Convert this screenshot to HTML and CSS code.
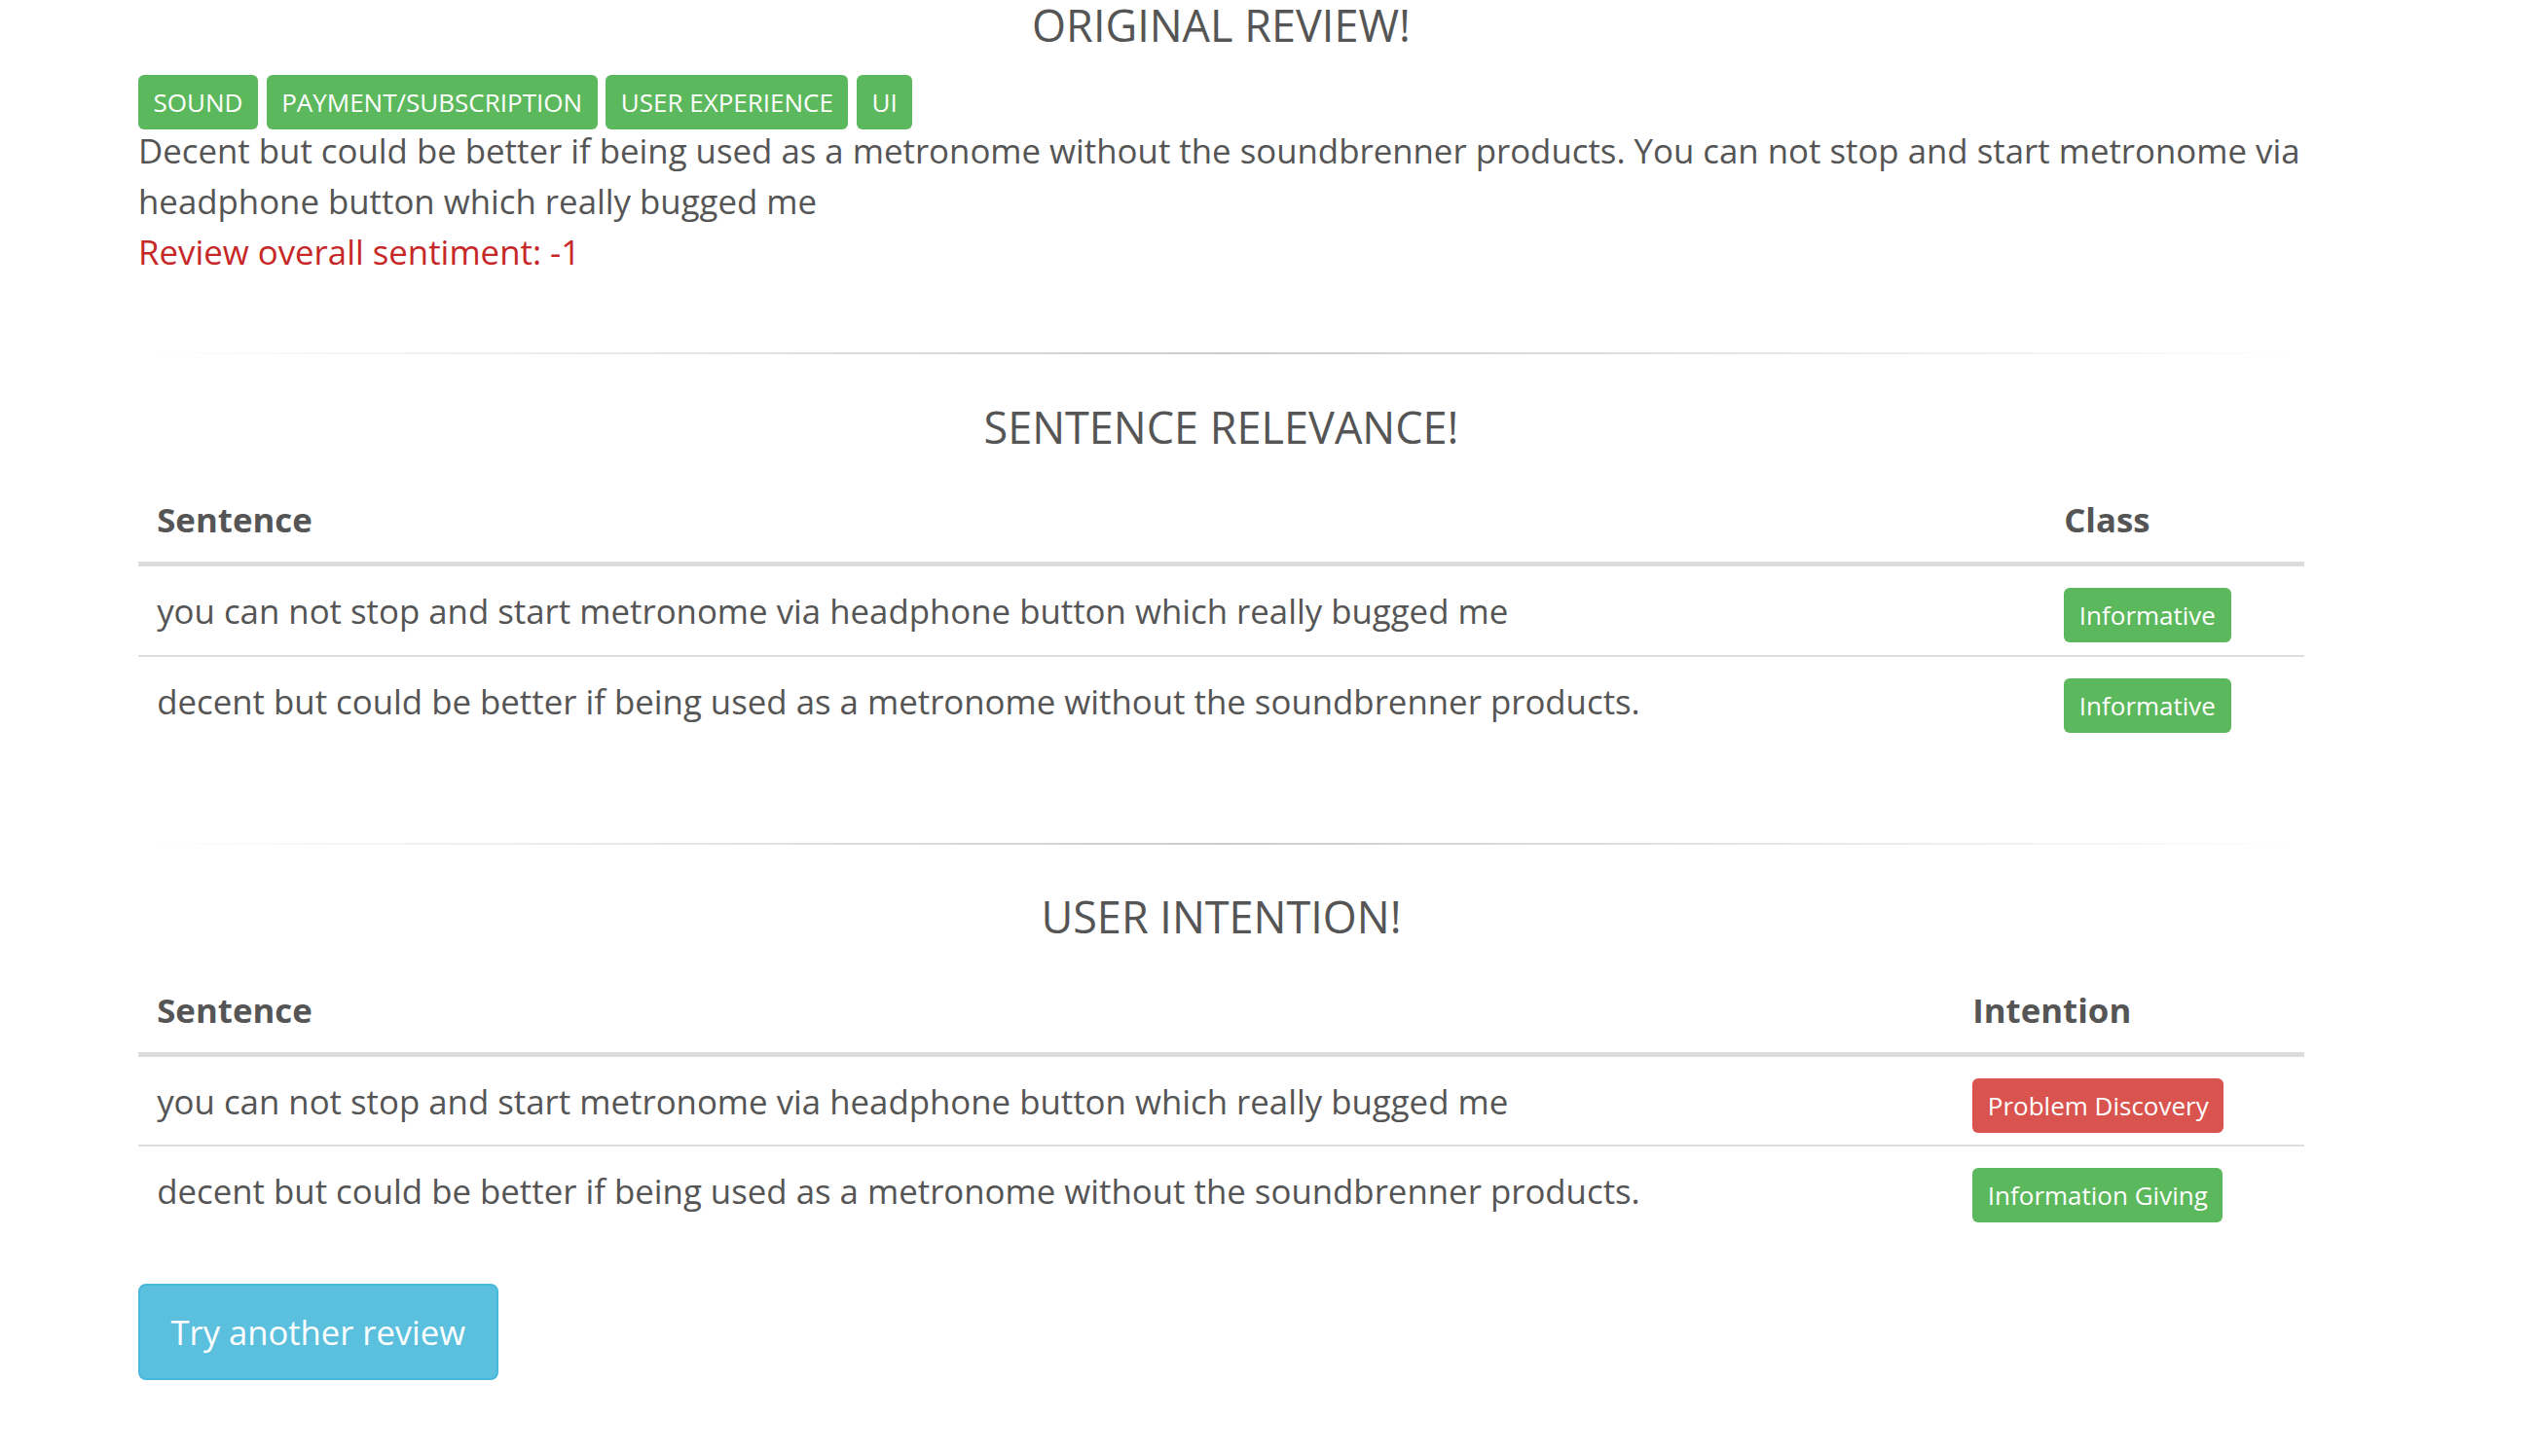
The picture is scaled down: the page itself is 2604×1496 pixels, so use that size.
FILE: index.html
```html
<!DOCTYPE html>
<html lang="en">
<head>
<meta charset="utf-8">
<title>Review analysis</title>
<link rel="stylesheet" href="styles.css">
</head>
<body>
<main class="container">
  <section class="review">
    <h3 class="section-title">ORIGINAL REVIEW!</h3>
    <div class="tags">
      <span class="tag tag-success">SOUND</span>
      <span class="tag tag-success">PAYMENT/SUBSCRIPTION</span>
      <span class="tag tag-success">USER EXPERIENCE</span>
      <span class="tag tag-success">UI</span>
    </div>
    <p class="review-text">Decent but could be better if being used as a metronome without the soundbrenner products. You can not stop and start metronome via headphone button which really bugged me</p>
    <p class="sentiment">Review overall sentiment: -1</p>
  </section>

  <hr class="divider">

  <section class="analysis">
    <h3 class="section-title">SENTENCE RELEVANCE!</h3>
    <table class="data-table">
      <thead>
        <tr><th>Sentence</th><th class="col-class">Class</th></tr>
      </thead>
      <tbody>
        <tr>
          <td>you can not stop and start metronome via headphone button which really bugged me</td>
          <td><span class="tag tag-success">Informative</span></td>
        </tr>
        <tr>
          <td>decent but could be better if being used as a metronome without the soundbrenner products.</td>
          <td><span class="tag tag-success">Informative</span></td>
        </tr>
      </tbody>
    </table>
  </section>

  <hr class="divider">

  <section class="analysis">
    <h3 class="section-title">USER INTENTION!</h3>
    <table class="data-table">
      <thead>
        <tr><th>Sentence</th><th class="col-intention">Intention</th></tr>
      </thead>
      <tbody>
        <tr>
          <td>you can not stop and start metronome via headphone button which really bugged me</td>
          <td><span class="tag tag-danger">Problem Discovery</span></td>
        </tr>
        <tr>
          <td>decent but could be better if being used as a metronome without the soundbrenner products.</td>
          <td><span class="tag tag-success">Information Giving</span></td>
        </tr>
      </tbody>
    </table>
  </section>

  <div class="actions">
    <button class="btn-info" type="button">Try another review</button>
  </div>
</main>
</body>
</html>
```

FILE: styles.css
```css
html, body {
  margin: 0;
  padding: 0;
  background: #ffffff;
}

body {
  font-family: "Open Sans", "Liberation Sans", sans-serif;
  font-size: 34.8px;
  line-height: 52px;
  color: #555555;
}

.container {
  width: 2225px;
  margin-left: 142px;
  padding-top: 1px;
  padding-bottom: 60px;
}

.section-title {
  margin: 0;
  font-size: 45px;
  font-weight: 400;
  line-height: 49.5px;
  text-align: center;
  color: #555555;
}

.tags {
  display: flex;
  align-items: flex-start;
  gap: 8.5px;
  height: 52px;
  margin-top: 26.5px;
}

.tag {
  display: inline-block;
  height: 56px;
  padding: 0 0.6em;
  font-size: 26px;
  line-height: 56px;
  font-weight: 400;
  color: #ffffff;
  border-radius: 6px;
  white-space: nowrap;
  vertical-align: baseline;
}

.tag-success {
  background: #5cb85c;
}

.tag-danger {
  background: #d9534f;
}

.review-text {
  margin: 0;
}

.sentiment {
  margin: 0;
  color: #c62828;
}

.divider {
  margin: 77px 0 49.8px;
  height: 2px;
  border: 0;
  background-image: linear-gradient(to right, rgba(0, 0, 0, 0), rgba(0, 0, 0, 0.2), rgba(0, 0, 0, 0));
}

.analysis {
  padding-bottom: 23px;
}

.data-table {
  width: 100%;
  margin-top: 27.5px;
  border-collapse: collapse;
  border-spacing: 0;
  table-layout: fixed;
}

.data-table th {
  padding: 19.2px;
  text-align: left;
  font-weight: 700;
  line-height: 48px;
  vertical-align: bottom;
  border-bottom: 5px solid #dddddd;
}

.data-table td {
  padding: 22px 19.2px 12.7px;
  line-height: 48px;
  vertical-align: top;
  border-top: 2px solid #dddddd;
}

.data-table .col-class {
  box-sizing: border-box;
  width: 266px;
}

.data-table .col-intention {
  box-sizing: border-box;
  width: 360px;
}

.actions {
  margin-top: 27px;
}

.btn-info {
  display: inline-block;
  height: 99px;
  margin: 0;
  padding: 0 31.5px;
  font-family: "Open Sans", "Liberation Sans", sans-serif;
  font-size: 34.6px;
  line-height: 95px;
  color: #ffffff;
  background: #5bc0de;
  border: 2px solid #46b8da;
  border-radius: 8px;
  cursor: pointer;
}
```
